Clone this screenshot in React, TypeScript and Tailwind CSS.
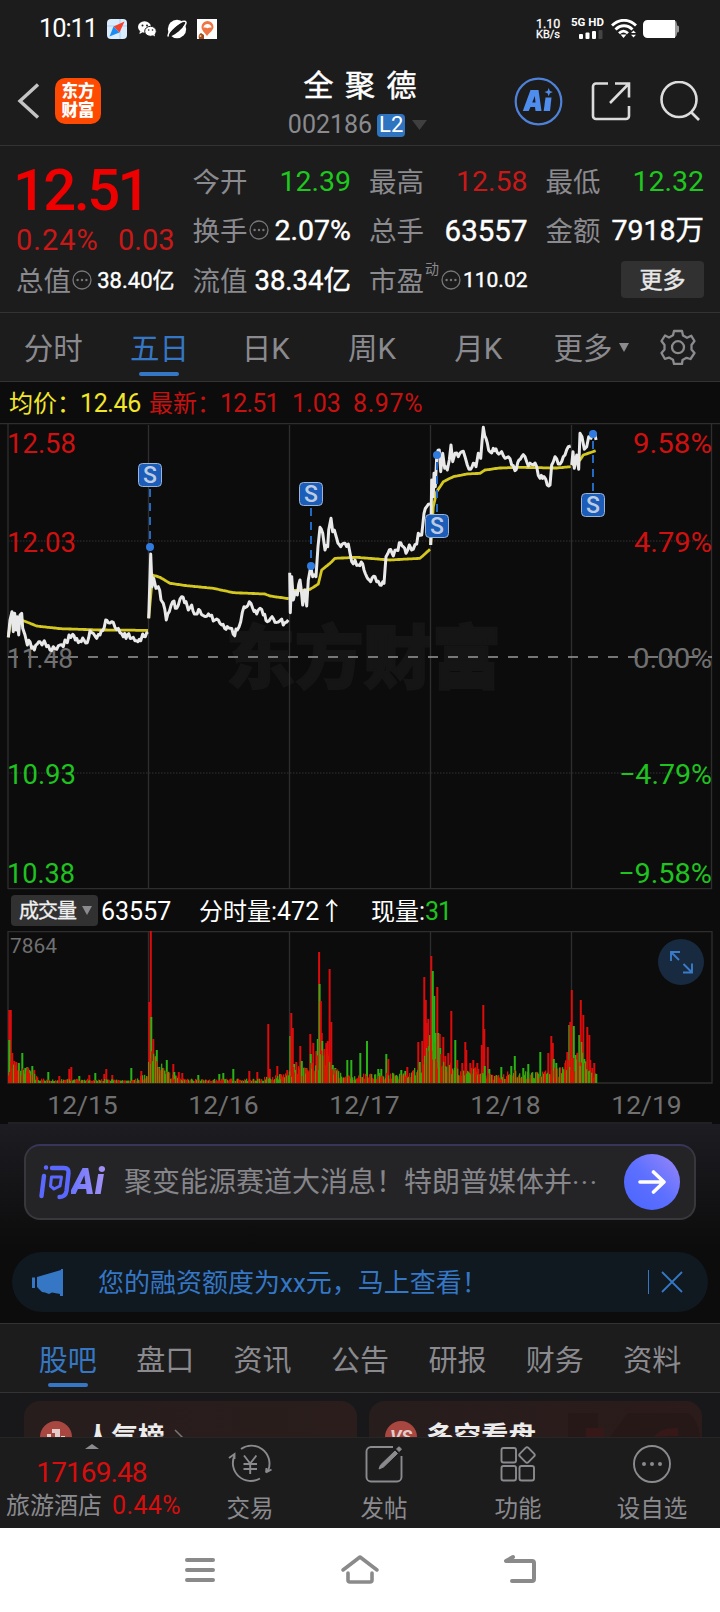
import React from "react";

const GREY = "#8a8a8f";

function Dots() {
  return (
    <svg width="20" height="20" viewBox="0 0 20 20" className="block shrink-0" fill="none" stroke="#77777b">
      <circle cx="10" cy="10" r="9" strokeWidth="1.3" />
      <g fill="#77777b" stroke="none">
        <circle cx="5.6" cy="10" r="1.2" />
        <circle cx="10" cy="10" r="1.2" />
        <circle cx="14.4" cy="10" r="1.2" />
      </g>
    </svg>
  );
}

function StatusBar() {
  return (
    <div className="flex h-[57px] items-center pl-[39px] pr-[41px] text-white">
      <span className="w-[68px] text-[25.500px] leading-none tracking-[-1.100px]">10:11</span>
      <div className="flex items-center gap-[10px]">
        <svg width="20" height="20" viewBox="0 0 20 20">
          <rect width="20" height="20" rx="4" fill="#d9ecfd" />
          <path d="M0 7h20M13 0v20" stroke="#a9d2f8" />
          <path d="M17.500 2.500L12.500 13.500L6.500 7.500z" fill="#f4432c" />
          <path d="M2.500 17.500L6.500 7.500L12.500 13.500z" fill="#1c8cf5" />
        </svg>
        <svg width="20" height="20" viewBox="0 0 20 20" fill="#fff">
          <ellipse cx="7.500" cy="8" rx="6.500" ry="5.800" />
          <path d="M3 12l-.6 3 3-1.500z" />
          <ellipse cx="13.500" cy="12.300" rx="5.800" ry="5" stroke="#1c1c1c" />
          <path d="M15.500 16l2.500 1.500-.5-2.500z" />
          <g fill="#1c1c1c">
            <circle cx="5.500" cy="6.500" r="1" /><circle cx="10" cy="6.500" r="1" />
            <circle cx="11.700" cy="11" r=".8" /><circle cx="15.500" cy="11" r=".8" />
          </g>
        </svg>
        <svg width="20" height="20" viewBox="0 0 20 20">
          <circle cx="10" cy="10" r="9.200" fill="#fff" />
          <ellipse cx="10" cy="10" rx="11.500" ry="2.800" transform="rotate(-40 10 10)" fill="#1c1c1c" />
          <path d="M1.500 17.500C-1 14 13 1 18.500 2.500c1.500 1-.5 4-2 6" fill="none" stroke="#fff" strokeWidth="1.500" />
        </svg>
        <svg width="20" height="20" viewBox="0 0 20 20">
          <rect width="20" height="20" fill="#fff" />
          <path d="M10 17C7 13 4.500 11 4.500 8a6 6 0 0 1 12 0c0 3-3.500 5-6.500 9z" fill="#ef7545" />
          <path d="M6.500 9c0-3 2-4 4-4s4 1 4 4c-1-1-2 0-2.500-.5-1 1-2 1-3 0-.5.5-1.500-.5-2.500.5z" fill="#fff" />
          <path d="M2 20c-1-3 0-5 2-6l3 2v4z" fill="#9c4a21" />
          <circle cx="3.500" cy="17" r="1" fill="#f6c06a" />
        </svg>
      </div>
      <div className="ml-auto flex items-center">
        <div className="flex w-[35px] flex-col items-start text-[11px] leading-[11px] [-webkit-text-stroke:0.3px]">
          <span className="text-[12.500px]">1.10</span>
          <span className="text-[11px]">KB/s</span>
        </div>
        <div className="flex w-[40px] flex-col items-start gap-[3px]">
          <span className="whitespace-nowrap text-[11.500px] font-bold leading-[9px]">5G HD</span>
          <svg width="24" height="9" viewBox="0 0 24 9" className="ml-2" fill="#fff">
            <rect x="0" y="4" width="4" height="5" rx="1" />
            <rect x="6.500" y="2.500" width="4" height="6.500" rx="1" />
            <rect x="13" y="1" width="4" height="8" rx="1" />
            <rect x="19.500" y="0" width="4" height="9" rx="1" fill="#444" />
          </svg>
        </div>
        <svg width="26" height="20" viewBox="0 0 26 20" className="mr-[6px]" fill="none" stroke="#fff" strokeWidth="2.800">
          <path d="M1 6.500C8-.5 18-.5 25 6.500" />
          <path d="M4.500 10.500c5-5 12-5 17 0" />
          <path d="M8 14.200c3-2.800 6-2.800 9 0" />
          <path d="M9.500 15.500h6L12.500 19z" fill="#fff" stroke="none" />
          <path d="M20 14l2.500-2.500L25 14zM20 15.700h5L22.500 18.500z" fill="#fff" stroke="none" />
        </svg>
        <svg width="36" height="18" viewBox="0 0 36 18">
          <rect x="10" width="24" height="18" rx="4.500" fill="#999" />
          <rect x="33" y="5.500" width="3" height="7" rx="1.500" fill="#999" />
          <path d="M4.500 0H32v18H4.500A4.500 4.500 0 0 1 0 13.500v-9A4.500 4.500 0 0 1 4.500 0z" fill="#fff" />
        </svg>
      </div>
    </div>
  );
}

function Header() {
  return (
    <div className="flex h-[89px] items-center border-b border-[#333] pl-[17px] pr-5">
      <svg width="24" height="38" viewBox="0 0 24 38" fill="none" stroke="#c4c4c4" strokeWidth="3.400">
        <path d="M21 2.500L3 19l18 16.500" />
      </svg>
      <div className="ml-[14px] flex h-[46px] w-[46px] flex-col items-center justify-center rounded-[10px] bg-[#fe4a02] pb-px text-[16.500px] font-black leading-[19px] text-white">
        <span>东方</span>
        <span>财富</span>
      </div>
      <div className="ml-[159px] mt-[2px] flex w-[200px] flex-col items-center">
        <span className="whitespace-nowrap pl-[2px] text-[30px] leading-[42px] tracking-[2px] text-white [-webkit-text-stroke:0.5px]">全 聚 德</span>
        <div className="flex items-center pl-[0px] pr-[4px] pt-[4px]">
          <span className="text-[25px] leading-[28px] text-[#8a8a8f]">002186</span>
          <span className="ml-[5px] flex h-[23px] w-[28px] items-center justify-center rounded-[4px] bg-[#2f74c0] text-[22px] leading-none text-white">L2</span>
          <svg width="16" height="11" viewBox="0 0 16 11" className="ml-[7px]"><path d="M0 0h15L7.500 10z" fill="#3f3f3f" /></svg>
        </div>
      </div>
      <svg width="49" height="49" viewBox="0 0 49 49" className="ml-auto" fill="#4e8cee">
        <circle cx="24.500" cy="24.500" r="22.800" fill="none" stroke="#4e82d8" strokeWidth="2.200" />
        <path fillRule="evenodd" d="M16.500 13h8l3 21h-6l-.5-4h-4.500l-1.800 4H8.800zM20.800 19l-2.500 6.500h3.200z" />
        <path d="M31.500 20.500h6l-1.500 13.500h-6.300z" />
        <path d="M34.700 11l1.200 3 3 1-3 1.200-1.200 3-1.200-3-3-1.200 3-1z" />
      </svg>
      <svg width="40" height="40" viewBox="0 0 40 40" className="ml-[28px]" fill="none" stroke="#dcdcdc" strokeWidth="2.600">
        <path d="M17 2.500H5A3 3 0 0 0 2 5.500V35a3 3 0 0 0 3 3h30a3 3 0 0 0 3-3V25M24 2.500h14v14M38 2.500L19 22" />
      </svg>
      <svg width="40" height="40" viewBox="0 0 40 40" className="ml-[29px]" fill="none" stroke="#dcdcdc" strokeWidth="2.600">
        <circle cx="19" cy="18.500" r="17.500" /><path d="M31 31l8 8" />
      </svg>
    </div>
  );
}

type StatProps = { label: string; value: string; tone?: string; small?: string; dots?: boolean; sup?: string };
function Stat({ label, value, tone = "text-white [-webkit-text-stroke:0.4px]", small = "text-[28.500px]", dots, sup }: StatProps) {
  return (
    <div className="flex h-[49.500px] items-center whitespace-nowrap leading-none">
      <span className="pt-[3px] text-[27.500px] text-[#8a8a8f]">{label}</span>
      {sup && <span className="mb-[22px] ml-[1px] text-[14px] text-[#8a8a8f]">{sup}</span>}
      {dots && <span className={sup ? "ml-[2px]" : "ml-[1px]"}><Dots /></span>}
      <span className={`ml-auto pt-[2px] ${small} ${tone}`}>{value}</span>
    </div>
  );
}

function Quote() {
  return (
    <div className="grid h-[167px] grid-cols-4 gap-x-[18px] border-b border-[#333] px-4 pt-[10px]">
      <div className="flex flex-col">
        <div className="ml-[-3px] h-[66px] whitespace-nowrap pt-px text-[58px] font-medium leading-[66px] tracking-[-2.600px] text-[#ee0000]">12.51</div>
        <div className="flex h-[33px] items-center justify-between pt-[3px] text-[29px] leading-none text-[#c81818]"><span className="tracking-[1px]">0.24%</span><span>0.03</span></div>
        <Stat label="总值" value="38.40亿" small="text-[22px]" dots />
      </div>
      <div>
        <Stat label="今开" value="12.39" tone="text-[#1ec81e]" />
        <Stat label="换手" value="2.07%" small="text-[28.500px]" dots />
        <Stat label="流值" value="38.34亿" small="text-[27.500px]" />
      </div>
      <div>
        <Stat label="最高" value="12.58" tone="text-[#c81818]" />
        <Stat label="总手" value="63557" small="text-[29.500px]" />
        <Stat label="市盈" value="110.02" sup="动" small="text-[21px]" dots />
      </div>
      <div>
        <Stat label="最低" value="12.32" tone="text-[#1ec81e]" />
        <Stat label="金额" value="7918万" small="text-[28.500px]" />
        <div className="flex h-[49px] items-center justify-end">
          <span className="flex h-[37px] w-[83px] items-center justify-center rounded-[4px] bg-[#313131] pt-px text-[23px] leading-none text-[#e8e8e8] [-webkit-text-stroke:0.4px]">更多</span>
        </div>
      </div>
    </div>
  );
}

function PeriodTabs() {
  return (
    <div className="flex h-[69px] border-b border-[#333] text-[29.500px] leading-none text-[#8a8a8f]">
      {["分时", "五日", "日K", "周K", "月K"].map((t, i) => (
        <div key={t} className={`flex w-[106.300px] flex-col items-center pt-[22px] ${i === 1 ? "text-[#3577c4]" : ""}`}>
          <span>{t}</span>
          {i === 1 && <i className="mt-[7px] h-[4px] w-10 rounded-full bg-[#3577c4]" />}
        </div>
      ))}
      <div className="flex flex-1 items-start pl-[22px] pt-[22px]">
        <span>更多</span>
        <svg width="10" height="9" viewBox="0 0 10 9" className="ml-[6px] mt-[8px]"><path d="M0 0h10L5 9z" fill={GREY} /></svg>
        <svg width="36" height="36" viewBox="0 0 36 36" className="ml-[31px] mt-[-6px]" fill="none" stroke={GREY} strokeWidth="2.300">
          <path d="M14 2h8l1 4.500 4 2.300 4.300-2L34.500 12 31.500 16v4.500l3 3.500-4 6-4-1.200-4 2.200L22 35h-8l-1-4.200-4-2.200-4.200 1.200L1.500 24l3-3.500V16l-3-4 3.500-5.500 4 2 4-2.200z" strokeLinejoin="round" />
          <circle cx="18" cy="18.200" r="6" />
        </svg>
      </div>
    </div>
  );
}

type Pt = [number, number];
function rng(seed: number) {
  let s = seed;
  return () => (s = (s * 16807) % 2147483647) / 2147483647;
}
/** Splits every segment and shakes the inner points, as minute ticks do. */
function ticks(src: string, amp: number, dx: number, dy: number) {
  const pts = src.split(" ").map((p) => p.split(",").map(Number) as Pt);
  const r = rng(77);
  const out: string[] = [];
  pts.forEach(([x, y], i) => {
    out.push(`${(x / 3 + dx).toFixed(1)},${(y / 3 + dy).toFixed(1)}`);
    const n = pts[i + 1];
    if (!n) return;
    const k = Math.floor((n[0] - x) / 4);
    for (let j = 1; j < k; j++) {
      const t = j / k;
      out.push(`${((x + (n[0] - x) * t) / 3 + dx).toFixed(1)},${((y + (n[1] - y) * t + (r() - 0.5) * amp) / 3 + dy).toFixed(1)}`);
    }
  });
  return out.join(" ");
}

const PRICE: [string, number, number][] = [
  ["25,652 30,600 36,575 40,635 44,580 48,630 52,590 56,645 60,585 65,580 68,625 75,645 82,675 90,665 95,685 103,690 112,672 120,665 126,675 133,662 140,680 150,690 160,680 170,688 180,675 190,680 195,660 202,668 207,645 218,643 230,655 240,663 252,660 262,668 270,632 280,640 290,655 300,645 308,632 317,600 325,608 335,605 345,622 360,638 370,650 382,645 395,655 410,662 422,662 428,642 436,650 444,636", 0, 420],
  ["446,595 452,402 456,500 461,475 468,505 475,500 483,540 490,550 499,600 508,575 518,545 530,565 545,530 558,545 565,570 575,555 587,582 600,572 612,588 630,588 645,600 655,600 665,615 678,628 690,625 700,643 712,630 722,605 732,560 740,560 748,545 758,565 770,582 780,565 790,585 802,605 812,595 825,607 840,602 855,608 865,600", 0, 420],
  ["29,458 31,578 35,470 40,540 46,515 52,525 60,480 68,555 74,510 80,558 85,480 92,440 98,470 108,470 114,380 120,322 128,340 135,390 143,380 146,330 153,295 158,335 163,330 170,355 182,380 195,370 205,372 215,425 225,420 235,435 248,432 260,470 272,485 285,470 300,495 312,490 318,410 328,390 340,408 350,390 362,368 370,380 378,400 388,375 395,390 410,372 415,340 425,345 432,280 440,260 450,252", 280, 420],
  ["32,405 35,210 40,260 42,190 46,230 50,140 58,120 62,185 68,130 74,175 82,180 88,150 93,105 98,155 105,130 115,140 125,125 135,140 142,165 152,178 160,160 168,170 175,130 182,145 190,52 198,85 210,125 220,115 232,128 245,125 255,145 265,140 275,165 285,182 297,150 305,140 315,140 325,168 340,165 350,170 360,205 372,200 382,225 390,225 395,165 405,140 415,162 425,155 435,135 445,110 452,108", 420, 410],
  ["455,165 459,125 463,175 470,135 476,178 480,70 486,80 493,118 500,110 506,80 513,85 520,65 528,90", 420, 410],
];
const AVERAGE: [string, number, number][] = [
  ["25,652 32,600 45,605 70,602 110,618 180,626 300,630 444,631", 0, 420],
  ["446,595 458,465 480,472 510,490 560,497 640,505 700,518 795,522 810,528 866,536", 0, 420],
  ["29,510 60,512 90,508 115,492 125,450 150,430 165,415 230,412 330,420 420,415 450,388", 280, 420],
  ["32,405 40,290 50,245 70,215 100,200 140,192 180,190 195,180 240,174 300,172 410,174 452,170", 420, 410],
  ["455,165 480,150 490,135 510,128 527,122", 420, 410],
];
const MARKS = [
  { x: 150, dot: 547, tag: 475 },
  { x: 311, dot: 566, tag: 494 },
  { x: 437, dot: 455, tag: 526 },
  { x: 593, dot: 434, tag: 505 },
];
const DAYS = [148.500, 289.500, 430.500, 571.500];

type LabelProps = { x: number; y: number; w: number; fill: string; end?: boolean; size?: number; children: string };
function Label({ x, y, w, fill, end, size = 28, children }: LabelProps) {
  return (
    <text x={end ? x - w : x} y={y} fill={fill} fontSize={size} textLength={w} lengthAdjust="spacingAndGlyphs">
      {children}
    </text>
  );
}

function PriceChart() {
  return (
    <svg width="720" height="467" viewBox="0 423 720 467" className="block bg-[#0c0c0c]">
      <g fill="#151515" stroke="#151515" strokeWidth="2" fontSize="69" fontWeight="900">
        <text x="226" y="683" textLength="275">东方财富</text>
      </g>
      <g stroke="#2e2e2e" strokeWidth="1.300" fill="none">
        <path d="M0 423.500H720M8 423.500V889M711.500 423.500V889M8 888.700H712" />
        {DAYS.map((x) => <path key={x} d={`M${x} 425V889`} />)}
        <path d="M8 541H712M8 773H712" strokeDasharray="1.500 1.500" stroke="#262626" />
      </g>
      <path d="M8 657H712" stroke="#999" strokeWidth="1.500" strokeDasharray="10 10" />
      <Label x={7} y={453} w={69} fill="#d01010">12.58</Label>
      <Label x={7} y={552} w={69} fill="#d01010">12.03</Label>
      <Label x={7} y={668} w={66} fill="#707070">11.48</Label>
      <Label x={7} y={784} w={69} fill="#1fc31f">10.93</Label>
      <Label x={7} y={883} w={68} fill="#1fc31f">10.38</Label>
      <Label x={712} y={453} w={79} fill="#d01010" end>9.58%</Label>
      <Label x={712} y={552} w={78} fill="#d01010" end>4.79%</Label>
      <Label x={712} y={668} w={79} fill="#707070" end>0.00%</Label>
      <Label x={712} y={784} w={93} fill="#1fc31f" end>−4.79%</Label>
      <Label x={712} y={883} w={94} fill="#1fc31f" end>−9.58%</Label>
      <g fill="none" strokeLinejoin="round">
        {AVERAGE.map(([p, x, y]) => <polyline key={p} points={ticks(p, 0, x, y)} stroke="#d4c820" strokeWidth="2.800" />)}
        {PRICE.map(([p, x, y]) => <polyline key={p} points={ticks(p, 18, x, y)} stroke="#e9e9e9" strokeWidth="3" />)}
      </g>
      {MARKS.map((m) => (
        <g key={m.x}>
          <path d={`M${m.x} ${m.tag}V${m.dot}`} stroke="#2469c4" strokeWidth="2" strokeDasharray="8 6" />
          <circle cx={m.x} cy={m.dot} r="4" fill="#2f7be0" />
          <rect x={m.x - 11.500} y={m.tag - 11.500} width="23" height="23" rx="4" fill="#1b5db8" stroke="#9db4d6" />
          <text x={m.x} y={m.tag + 8} textAnchor="middle" fontSize="23" fontWeight="500" fill="#bccbe2">S</text>
        </g>
      ))}
    </svg>
  );
}

/** Taller volume bars: x, height, colour. */
const SPIKES: [number, number, "r" | "g"][] = [
  [9, 73, "r"], [10.500, 73, "r"], [9, 43, "g"], [12, 30, "r"], [14, 22, "r"], [16, 21, "r"], [18.500, 20, "g"], [22, 30, "g"], [25, 15, "g"], [27, 16, "g"], [29, 13, "g"], [32, 17, "g"], [34, 13, "r"],
  [48, 11, "g"], [59, 7, "r"], [69, 14, "r"], [71, 16, "r"], [79, 7, "g"], [89, 8, "r"], [95, 10, "g"], [104, 9, "r"], [106, 14, "r"], [112, 8, "r"], [131, 15, "g"], [141, 12, "r"],
  [149, 81, "r"], [150.500, 152, "r"], [151, 66, "g"], [153, 44, "r"], [154.500, 26, "r"], [156.500, 33, "g"], [159, 16, "g"], [162, 15, "g"], [164, 12, "g"], [166.500, 23, "g"], [173, 19, "r"], [174, 11, "g"], [178.500, 11, "r"], [182, 10, "r"],
  [198, 8, "g"], [219, 9, "g"], [223, 10, "g"], [233, 14, "g"], [249, 12, "r"], [257, 11, "r"], [268, 59, "r"], [269.500, 14, "r"], [277, 17, "r"], [280, 9, "r"], [287, 13, "r"],
  [290, 47, "g"], [291, 70, "r"], [292.500, 55, "r"], [294, 19, "g"], [296, 21, "r"], [300, 37, "r"], [301.500, 22, "g"], [306, 15, "g"], [310, 49, "r"], [310.500, 29, "g"], [313, 40, "r"], [316, 32, "r"], [317.500, 44, "g"],
  [318.800, 131, "r"], [319.300, 99, "g"], [320.500, 82, "r"], [321.500, 50, "r"], [322, 42, "g"], [324, 34, "r"], [326, 40, "r"], [327.500, 42, "r"], [329.300, 114, "r"], [331, 61, "r"], [332.500, 18, "g"], [335, 15, "g"],
  [347, 23, "g"], [351, 23, "g"], [360, 30, "g"], [366.700, 42, "g"], [378, 14, "g"], [381, 14, "g"], [386, 29, "g"], [388, 24, "r"], [401, 13, "g"], [405, 12, "g"], [407, 16, "r"],
  [418, 41, "r"], [419.500, 21, "g"], [422, 42, "r"], [424, 106, "r"], [425.500, 83, "r"], [426.500, 60, "r"], [428, 64, "r"], [429, 37, "g"], [431, 127, "r"], [432.500, 112, "g"], [434, 87, "g"], [435.500, 50, "g"], [437, 96, "r"], [438, 50, "g"], [439.500, 49, "r"], [440, 35, "g"], [443, 46, "r"], [445, 27, "r"], [448, 30, "r"], [451, 72, "r"], [455, 43, "g"], [457, 23, "r"], [462, 20, "r"], [465, 41, "r"], [466, 33, "r"], [470, 20, "r"], [473, 23, "r"], [477, 20, "r"],
  [481.500, 38, "r"], [483, 78, "r"], [484, 54, "r"], [484.500, 17, "g"], [487.500, 36, "r"], [489, 14, "g"], [501, 16, "g"], [511, 17, "g"], [514.500, 27, "g"], [523, 15, "g"], [528, 19, "g"], [540, 31, "g"],
  [548, 30, "r"], [551, 47, "r"], [552.500, 40, "r"], [553.500, 24, "g"], [556, 20, "g"], [565, 20, "r"], [567, 31, "r"], [569, 58, "g"], [570, 61, "r"], [571.500, 93, "r"], [573.500, 57, "g"], [575.500, 28, "g"], [577, 30, "r"], [579, 48, "g"], [580.500, 83, "r"], [581.500, 41, "g"], [583, 68, "r"], [584, 24, "g"], [587, 56, "r"], [589, 48, "r"], [590, 23, "r"], [592, 15, "r"], [594, 20, "r"], [596, 9, "g"],
];
const FLOOR: Pt[] = [[8, 20], [20, 18], [34, 11], [38, 4], [135, 4], [146, 10], [150, 34], [156, 24], [166, 12], [185, 4], [250, 4], [285, 9], [295, 16], [310, 20], [325, 34], [335, 16], [345, 7], [375, 10], [410, 9], [420, 24], [428, 48], [436, 42], [446, 20], [460, 14], [480, 15], [492, 8], [515, 12], [540, 12], [556, 15], [566, 22], [580, 32], [588, 17], [596, 9]];
function floorAt(x: number) {
  const i = Math.max(1, FLOOR.findIndex((p) => p[0] >= x));
  const [a, b] = [FLOOR[i - 1], FLOOR[i]];
  return a[1] + ((b[1] - a[1]) * (x - a[0])) / (b[0] - a[0]);
}

function VolumeChart() {
  const r = rng(4242);
  const base: [number, number, string][] = [];
  for (let x = 8; x < 596; x += 1) base.push([x, Math.max(2, floorAt(x) * (0.35 + r() * 0.75)), r() < 0.45 ? "g" : "r"]);
  return (
    <svg width="720" height="153" viewBox="0 931 720 153" className="block">
      <g stroke="#2e2e2e" strokeWidth="1.300" fill="none">
        <path d="M8 931.500H712V1083H8z" />
        {DAYS.map((x) => <path key={x} d={`M${x} 931V1083`} />)}
      </g>
      <Label x={10} y={953} w={47} fill="#707070" size={21}>7864</Label>
      {SPIKES.map(([x, h, c], i) => (
        <rect key={i} x={x - 0.700} y={1083 - h} width="2" height={h} fill={c === "r" ? "#dc0c0c" : "#28b414"} />
      ))}
      {base.map(([x, h, c], i) => (
        <rect key={i} x={x} y={1083 - h} width="1.300" height={h} fill={c === "r" ? "#d41804" : "#3fa008"} />
      ))}
      <circle cx="681" cy="962" r="23" fill="#182a40" />
      <g fill="none" stroke="#3a7cc8" strokeWidth="1.900">
        <path d="M680 952h-9v9M671 952l8 8M683 972.500h9v-9M692 972.500l-8.500-8.500" />
      </g>
    </svg>
  );
}

function Charts() {
  return (
    <div className="bg-[#0c0c0c]">
      <div className="flex h-[41px] items-center whitespace-nowrap pl-[9px] pt-[2px] text-[24px] leading-none text-[#c81010]">
        <span className="w-[71px] text-[#f2e62a]">均价：</span>
        <span className="w-[69px] text-[25px] tracking-[-0.4px] text-[#f2e62a]">12.46</span>
        <span className="w-[71px]">最新：</span>
        <span className="w-[72px] text-[25px] tracking-[-0.800px]">12.51</span>
        <span className="w-[61px] text-[25px]">1.03</span>
        <span className="text-[25px] tracking-[0.600px]">8.97%</span>
      </div>
      <PriceChart />
      <div className="flex h-[41px] items-center whitespace-nowrap pl-[11px] text-[25px] leading-none text-white">
        <span className="flex h-[31px] w-[87px] items-center rounded-[4px] bg-[#313131] pl-2 text-[20px] tracking-[-1px] text-[#f0f0f0] [-webkit-text-stroke:0.3px]">
          成交量
          <svg width="10" height="9" viewBox="0 0 10 9" className="ml-[6px]"><path d="M0 0h10L5 9z" fill={GREY} /></svg>
        </span>
        <span className="ml-[3px] w-[98px] pt-[2px]">63557</span>
        <span className="w-[172px] pt-[2px]"><span className="text-[24px]">分时量</span>:472↑</span>
        <span className="pt-[2px]"><span className="text-[24px]">现量</span>:<span className="text-[#1fc31f] tracking-[-1px]">31</span></span>
      </div>
      <VolumeChart />
      <div className="flex h-[38px] items-center pl-[12px] pt-[4px] text-[26.500px] leading-none text-[#707070]">
        {["12/15", "12/16", "12/17", "12/18", "12/19"].map((d) => (
          <span key={d} className="w-[141px] shrink-0 text-center">{d}</span>
        ))}
      </div>
      <div className="mx-2 h-[2px] bg-[#212123]" />
    </div>
  );
}

function AskAi() {
  return (
    <div className="h-[123px] bg-gradient-to-b from-[#1d1c22] to-[#0c0c0c] px-6 pt-[20px]">
      <div className="flex h-[76px] items-center rounded-[16px] border-2 border-[#38383c] border-t-[#37355a] bg-[#242426] pl-[13px] pr-[14px]">
        <div className="flex w-[68px] shrink-0 items-center">
          <svg width="33" height="36" viewBox="0 0 33 36" className="shrink-0">
            <g fill="none" stroke="#5b68ff" strokeWidth="4.400" strokeLinejoin="round" strokeLinecap="round">
              <path d="M5 12L2.500 32M7 3.500l.1 0M13 4h12q5 0 4.500 5l-2 18q-1 6-7 6" />
              <path d="M12.500 13h10l-1.500 9-6 3-3.500-3z" strokeWidth="3" />
            </g>
          </svg>
          <span className="-ml-px bg-gradient-to-r from-[#6b74ff] to-[#a894f4] bg-clip-text pr-1 text-[36px] font-black italic leading-[44px] tracking-[0px] text-transparent">Ai</span>
        </div>
        <span className="ml-[17px] whitespace-nowrap pt-[2px] text-[28px] leading-none text-[#85858a]">聚变能源赛道大消息！特朗普媒体并<span className="font-['Roboto'] tracking-[1.500px]">···</span></span>
        <span className="ml-auto flex h-[56px] w-[56px] shrink-0 items-center justify-center rounded-full bg-gradient-to-tr from-[#4a64ff] via-[#5d70ff] to-[#9a86f8]">
          <svg width="28" height="26" viewBox="0 0 28 26" fill="none" stroke="#fff" strokeWidth="3.600" strokeLinecap="round" strokeLinejoin="round">
            <path d="M2 13h23M15.500 3L26 13 15.500 23" />
          </svg>
        </span>
      </div>
    </div>
  );
}

function Notice() {
  return (
    <div className="h-[76px] bg-[#0c0c0c] px-3 pt-[5px]">
      <div className="flex h-[60px] items-center rounded-full bg-[#101820] pl-5 text-[#3577c4]">
        <svg width="31" height="27" viewBox="0 0 31 27" fill="#3577c4">
          <path d="M0 8.500h3V19H0zM5 8L29 1V0h2v27h-3v-2l-8-1.500-3 1.500-4-1.500-3-.5L5 18z" />
        </svg>
        <span className="ml-[35px] whitespace-nowrap pt-px text-[26px] leading-none">您的融资额度为xx元，马上查看！</span>
        <i className="ml-auto h-[24px] w-px bg-[#3577c4]" />
        <svg width="22" height="22" viewBox="0 0 22 22" className="ml-[12px] mr-[25px]" stroke="#3577c4" strokeWidth="1.800">
          <path d="M1 1l20 20M21 1L1 21" />
        </svg>
      </div>
    </div>
  );
}

function ContentTabs() {
  return (
    <div className="flex h-[70px] border-y border-[#333] px-[19px] text-[29px] leading-none text-[#8a8a8f]">
      {["股吧", "盘口", "资讯", "公告", "研报", "财务", "资料"].map((t, i) => (
        <div key={t} className={`flex flex-1 flex-col items-center pt-[23px] ${i === 0 ? "text-[#3577c4]" : ""}`}>
          <span>{t}</span>
          {i === 0 && <i className="mt-[7px] h-[4px] w-10 rounded-full bg-[#3577c4]" />}
        </div>
      ))}
    </div>
  );
}

function Cards() {
  return (
    <div className="flex h-[44px] gap-3 overflow-hidden bg-[#18181a] px-6 pt-2">
      <div className="flex h-20 w-[333px] shrink-0 items-start rounded-[16px] bg-gradient-to-r from-[#271d1d] to-[#2a1d1c] pl-4 pt-5">
        <svg width="32" height="32" viewBox="0 0 32 32">
          <circle cx="16" cy="16" r="16" fill="#a84640" />
          <path d="M7 13h4v12H7zM12 8h8v17h-5V12h-3zM21 15h4v10h-4z" fill="#e4cccb" />
        </svg>
        <span className="ml-[13px] mt-[1px] text-[26.500px] font-bold leading-[30px] text-[#ececec]">人气榜</span>
        <svg width="12" height="24" viewBox="0 0 12 24" className="ml-[9px] mt-[8px]" fill="none" stroke="#777" strokeWidth="1.500"><path d="M1 1l9 9-9 9" /></svg>
      </div>
      <div className="flex h-20 w-[333px] shrink-0 items-start rounded-[16px] bg-gradient-to-r from-[#271d1d] to-[#2b1b1a] pl-4 pt-5">
        <span className="flex h-8 w-8 items-center justify-center rounded-full bg-[#a84640] text-[18px] font-bold italic leading-none text-[#e4cccb]">VS</span>
        <span className="ml-[9px] mt-[1px] whitespace-nowrap text-[27.500px] font-bold leading-[30px] text-[#ececec]">多空看盘</span>
        <svg width="132" height="60" viewBox="0 0 132 60" className="ml-[32px] mt-[-8px]" fill="#251817">
          <path d="M0 0h30v24h12L60 0h60q12 8 12 30v30H0z" />
          <path d="M18 15h18v40H18zM86 24q6-10 24-9v8z" fill="#351817" />
        </svg>
      </div>
    </div>
  );
}

function BottomBar() {
  const s = { fill: "none", stroke: GREY, strokeWidth: 1.900 };
  const items: [string, React.ReactNode][] = [
    ["交易", <svg key="a" width="44" height="40" viewBox="0 0 44 40" {...s}>
      <path d="M13 5a18 18 0 0 1 27.500 20.500l-2.500 3M38 28.500l.5-4.500M38 28.500l5.500-3M32 34.500A18 18 0 0 1 6.500 11.500M1 14l5.500-4v5" />
      <path d="M16 11.500l6.200 8 6.200-8M22.200 19.500V30M15.500 20h13.500M15.500 25h13.500" />
    </svg>],
    ["发帖", <svg key="b" width="40" height="40" viewBox="0 0 40 40" {...s}>
      <path d="M29 3H7a4.500 4.500 0 0 0-4.500 4.500V33A4.500 4.500 0 0 0 7 37.500h26a4.500 4.500 0 0 0 4.500-4.500V12" />
      <path d="M15 25l1.500-4L31 7l2.500 2.500L19.500 23zM32.500 5l2.500-2.200 2.500 2.200-2.300 2.600z" fill={GREY} strokeWidth="1" />
    </svg>],
    ["功能", <svg key="c" width="38" height="40" viewBox="0 0 38 40" {...s}>
      <rect x="2.500" y="4" width="14.500" height="14.500" rx="2" /><rect x="2.500" y="22" width="14.500" height="14.500" rx="2" /><rect x="20.500" y="22" width="14.500" height="14.500" rx="2" />
      <rect x="22" y="5" width="12" height="12" rx="2" transform="rotate(45 28 11)" />
    </svg>],
    ["设自选", <svg key="d" width="40" height="40" viewBox="0 0 40 40" {...s}>
      <circle cx="20" cy="20" r="18" />
      <g fill={GREY} stroke="none"><circle cx="12" cy="20" r="2" /><circle cx="20" cy="20" r="2" /><circle cx="28" cy="20" r="2" /></g>
    </svg>],
  ];
  return (
    <div className="flex h-[91px] border-t border-[#262626] bg-[#1c1c1c] leading-none">
      <div className="flex w-[183px] shrink-0 flex-col items-center whitespace-nowrap">
        <svg width="14" height="5" viewBox="0 0 14 5" className="mt-[6px]"><path d="M0 5h14L7 0z" fill={GREY} /></svg>
        <span className="mt-[10px] text-[28px] leading-[27px] tracking-[-0.900px] text-[#d80d0d]">17169.48</span>
        <div className="mt-[7px] flex items-center gap-[10px] pl-[4px]">
          <span className="text-[24px] text-[#8a8a8f]">旅游酒店</span>
          <span className="text-[25px] tracking-[0.400px] text-[#d80d0d]">0.44%</span>
        </div>
      </div>
      {items.map(([t, icon]) => (
        <div key={t} className="flex w-[134px] flex-col items-center pt-[6px]">
          {icon}
          <span className="mt-[14px] text-[23.500px] text-[#8a8a8f]">{t}</span>
        </div>
      ))}
    </div>
  );
}

function SystemNav() {
  const s = { fill: "none", stroke: "#8a8a8a", strokeWidth: 4, strokeLinecap: "round" as const, strokeLinejoin: "round" as const };
  return (
    <div className="flex h-[84px] items-center justify-center gap-[123px] bg-white">
      <svg width="34" height="28" viewBox="0 0 34 28" {...s}><path d="M4 4h26M4 14h26M4 24h26" /></svg>
      <svg width="40" height="32" viewBox="0 0 40 32" className="mb-[3px]" {...s} strokeWidth="3.600"><path d="M3 17L20 4l17 13M8 20v7q0 2 2 2h20q2 0 2-2v-7" /></svg>
      <svg width="34" height="30" viewBox="0 0 34 30" className="mb-[3px]" {...s}><path d="M10 3L3 7h26q2 0 2 2v16q0 2-2 2H9" /></svg>
    </div>
  );
}

export default function App() {
  return (
    <div className="w-[720px] overflow-hidden bg-[#1c1c1c] font-['Roboto','Noto_Sans_CJK_SC',sans-serif]">
      <StatusBar />
      <Header />
      <Quote />
      <PeriodTabs />
      <Charts />
      <AskAi />
      <Notice />
      <ContentTabs />
      <Cards />
      <BottomBar />
      <SystemNav />
    </div>
  );
}
